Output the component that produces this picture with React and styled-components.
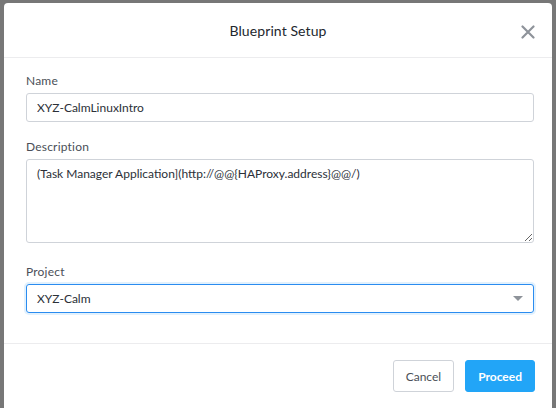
import React from "react";
import styled, { createGlobalStyle } from "styled-components";

const GlobalStyle = createGlobalStyle`
  html, body {
    margin: 0;
    padding: 0;
    background: #777777;
    font-family: Lato, "Open Sans", sans-serif;
    overflow: hidden;
  }
  * { box-sizing: border-box; }
`;

const Backdrop = styled.div`
  width: 556px;
  height: 408px;
  padding: 3px 4px 0 4px;
  background: #777777;
`;

const Modal = styled.div`
  background: #fff;
  border-radius: 4px;
  height: 420px;
  display: flex;
  flex-direction: column;
`;

const Header = styled.div`
  height: 55px;
  display: flex;
  align-items: center;
  justify-content: center;
  position: relative;
  border-bottom: 1px solid #ececee;
`;

const Title = styled.div`
  font-size: 14px;
  color: #22272e;
  letter-spacing: 0.1px;
  padding-top: 1px;
`;

const Close = styled.button`
  position: absolute;
  right: 16px;
  top: 22px;
  width: 16px;
  height: 16px;
  padding: 0;
  border: none;
  background: none;
  cursor: pointer;
`;

const Body = styled.div`
  padding: 15px 18px 0 22px;
  display: flex;
  flex-direction: column;
  height: 286px;
  border-bottom: 1px solid #ececee;
`;

const Field = styled.div`
  display: flex;
  flex-direction: column;
  margin-bottom: ${p => p.gap || 17}px;
`;

const Label = styled.label`
  font-size: 12px;
  color: #4a4f57;
  margin-bottom: 5px;
  letter-spacing: 0.2px;
`;

const Input = styled.input`
  height: 29px;
  border: 1px solid #cfd3d9;
  border-radius: 3px;
  padding: 0 10px;
  font-family: inherit;
  font-size: 12px;
  color: #2b3038;
  outline: none;
`;

const TextArea = styled.textarea`
  height: 84px;
  border: 1px solid #cfd3d9;
  border-radius: 3px;
  padding: 6px 10px;
  font-family: inherit;
  font-size: 12px;
  color: #2b3038;
  resize: vertical;
  outline: none;
`;

const Select = styled.div`
  height: 29px;
  border: 1px solid #2a8cf0;
  border-radius: 3px;
  box-shadow: 0 0 0 2px #e2f1fd;
  padding: 0 10px;
  display: flex;
  align-items: center;
  justify-content: space-between;
  font-size: 12px;
  color: #2b3038;
`;

const Caret = styled.span`
  width: 0;
  height: 0;
  border-left: 5px solid transparent;
  border-right: 5px solid transparent;
  border-top: 5px solid #8e939a;
`;

const Footer = styled.div`
  display: flex;
  justify-content: flex-end;
  gap: 11px;
  padding: 16px 17px 0 0;
`;

const Button = styled.button`
  height: 32px;
  padding: 0 12px;
  border-radius: 3px;
  font-family: inherit;
  font-size: 12px;
  font-weight: ${p => (p.primary ? 700 : 400)};
  color: ${p => (p.primary ? "#fff" : "#4a4f57")};
  background: ${p => (p.primary ? "#22a5f7" : "#fff")};
  border: 1px solid ${p => (p.primary ? "#22a5f7" : "#cfd3d9")};
  cursor: pointer;
`;

export default function App() {
  return (
    <>
      <GlobalStyle />
      <Backdrop>
        <Modal>
          <Header>
            <Title>Blueprint Setup</Title>
            <Close aria-label="close">
              <svg width="14" height="14" viewBox="0 0 14 14">
                <path d="M1.5 1.5 L12.5 12.5 M12.5 1.5 L1.5 12.5" stroke="#8e939a" strokeWidth="2.2" strokeLinecap="round" />
              </svg>
            </Close>
          </Header>
          <Body>
            <Field>
              <Label>Name</Label>
              <Input defaultValue="XYZ-CalmLinuxIntro" />
            </Field>
            <Field gap={21}>
              <Label>Description</Label>
              <TextArea defaultValue="(Task Manager Application](http://@@{HAProxy.address}@@/)" />
            </Field>
            <Field>
              <Label>Project</Label>
              <Select>
                XYZ-Calm
                <Caret />
              </Select>
            </Field>
          </Body>
          <Footer>
            <Button>Cancel</Button>
            <Button primary>Proceed</Button>
          </Footer>
        </Modal>
      </Backdrop>
    </>
  );
}
